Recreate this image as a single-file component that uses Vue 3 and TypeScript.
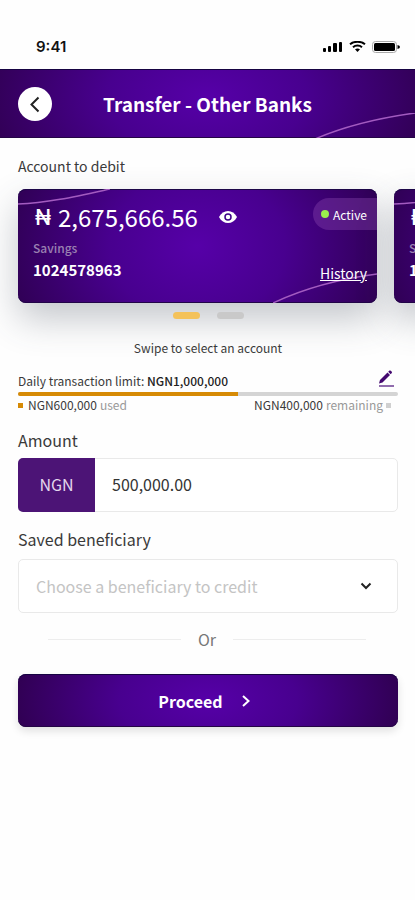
<script setup lang="ts">
import { ref } from 'vue'

interface Account {
  id: number
  balance: string
  kind: string
  number: string
}

const accounts: Account[] = [
  { id: 0, balance: '2,675,666.56', kind: 'Savings', number: '1024578963' },
  { id: 1, balance: '2,675,666.56', kind: 'Savings', number: '1024578963' },
]

const current = ref(0)
const hidden = ref(false)
const amount = ref('500,000.00')
const beneficiary = ref('')
const usedShare = 58
</script>

<template>
  <div class="page">
    <div class="status">
      <span class="clock">9:41</span>
      <div class="signals">
        <svg width="20" height="11" viewBox="0 0 20 11" aria-hidden="true">
          <rect x="0" y="7" width="3" height="4" rx="1" />
          <rect x="5" y="5" width="3" height="6" rx="1" />
          <rect x="10" y="2" width="4" height="9" rx="1" />
          <rect x="16" y="1" width="3" height="10" rx="1" />
        </svg>
        <svg width="17" height="11" viewBox="0 0 17 11" aria-hidden="true">
          <path d="M1 3.2C5 0 12 0 16 3.2" fill="none" stroke="#000" stroke-width="2" />
          <path d="M4 6.2C6.5 4 10.5 4 13 6.2" fill="none" stroke="#000" stroke-width="2" />
          <path d="M6 8.2Q8.500 6.600 11 8.200L8.500 11Z" />
        </svg>
        <svg width="28" height="12" viewBox="0 0 28 12" aria-hidden="true">
          <rect x="0.500" y="0.500" width="24" height="11" rx="3" fill="none" stroke="#aaa" />
          <rect x="2" y="2" width="21" height="8" rx="1.500" />
          <path d="M25.500 4Q28 4.500 28 6T25.500 8Z" />
        </svg>
      </div>
    </div>

    <header class="top">
      <svg class="top-arc" width="100" height="25" viewBox="0 0 100 25" aria-hidden="true">
        <path d="M0 26C30 13 64 5 100 0" />
      </svg>
      <button class="back" type="button" aria-label="Back">
        <svg width="34" height="34" viewBox="0 0 34 34" aria-hidden="true">
          <path d="M20.500 10.500L13.500 17.500L20.500 24.500" />
        </svg>
      </button>
      <h1>Transfer - Other Banks</h1>
    </header>

    <main class="content">
      <h2 class="debit-title">Account to debit</h2>

      <div class="track" :style="{ transform: `translateX(${current * -100}%)` }">
        <article v-for="account in accounts" :key="account.id" class="card">
          <svg class="arc-start" width="92" height="16" viewBox="0 0 92 16" aria-hidden="true">
            <path d="M0 15C30 14 60 7 92 0" />
          </svg>
          <svg class="arc-end" width="104" height="30" viewBox="0 0 104 30" aria-hidden="true">
            <path d="M0 30C32 15 66 6 104 1" />
          </svg>
          <div class="balance">
            <span class="naira">₦</span>
            <span class="sum">{{ hidden ? '••••••••' : account.balance }}</span>
            <button class="eye" type="button" aria-label="Toggle balance" @click="hidden = !hidden">
              <svg width="18" height="12" viewBox="0 0 18 12" aria-hidden="true">
                <path d="M0 6C4 -2 14 -2 18 6C14 14 4 14 0 6Z" fill="#fff" />
                <circle cx="9" cy="6" r="3" fill="none" stroke="#3c0088" stroke-width="1.500" />
              </svg>
            </button>
          </div>
          <span class="badge"><i class="live"></i>Active</span>
          <span class="kind">{{ account.kind }}</span>
          <span class="number">{{ account.number }}</span>
          <a class="history" href="#history">History</a>
        </article>
      </div>

      <div class="dots">
        <button
          v-for="account in accounts"
          :key="account.id"
          class="dot"
          :class="{ active: current === account.id }"
          type="button"
          :aria-label="`Account ${account.id + 1}`"
          @click="current = account.id"
        ></button>
      </div>
      <p class="hint">Swipe to select an account</p>

      <section class="limit">
        <div class="limit-head">
          <p>Daily transaction limit: <strong>NGN1,000,000</strong></p>
          <button class="edit" type="button" aria-label="Edit limit">
            <svg width="16" height="18" viewBox="0 0 16 18" aria-hidden="true">
              <path d="M1 13.500L2 10L9.500 2.500L12 5L4.500 12.500Z" fill="#43086f" />
              <path d="M10.200 1.800L11.500 0.600Q12.200 0.200 12.800 0.800L13.800 1.800Q14.200 2.400 13.800 3L12.600 4.300Z" fill="#43086f" />
              <path d="M1 16H16" stroke="#6b3b92" stroke-width="1.500" />
            </svg>
          </button>
        </div>
        <div class="meter" role="progressbar" aria-label="Daily limit used" :aria-valuenow="usedShare">
          <div class="meter-fill" :style="{ width: `${usedShare}%` }"></div>
        </div>
        <div class="limit-foot">
          <p><i class="mark used"></i>NGN600,000 <span>used</span></p>
          <p class="left">NGN400,000 <span>remaining</span><i class="mark rest"></i></p>
        </div>
      </section>

      <form class="form" @submit.prevent>
        <label class="label" for="amount">Amount</label>
        <div class="amount">
          <span class="currency">NGN</span>
          <input id="amount" v-model="amount" type="text" inputmode="decimal" />
        </div>

        <label class="label" for="beneficiary">Saved beneficiary</label>
        <div class="picker">
          <select id="beneficiary" v-model="beneficiary">
            <option value="">Choose a beneficiary to credit</option>
          </select>
          <svg width="12" height="8" viewBox="0 0 12 8" aria-hidden="true">
            <path d="M1.500 1.500L6 6L10.500 1.500" />
          </svg>
        </div>

        <div class="or"><span>Or</span></div>

        <button class="proceed" type="submit">
          Proceed
          <svg width="8" height="12" viewBox="0 0 8 12" aria-hidden="true">
            <path d="M1 1L6.500 6L1 11" />
          </svg>
        </button>
      </form>
    </main>
  </div>
</template>

<style>
body {
  margin: 0;
  background: #fefefe;
}
</style>

<style scoped>
* {
  box-sizing: border-box;
}

.page {
  min-height: 100vh;
  overflow: hidden;
  background: #fefefe;
  color: #3a3a3a;
  font-family: "Noto Sans CJK SC", "Noto Sans", sans-serif;
  font-size: 12px;
}

h1,
h2,
p {
  margin: 0;
  font-weight: 400;
}

button {
  padding: 0;
  border: 0;
  background: none;
  font-family: inherit;
  cursor: pointer;
}

svg {
  display: block;
}

.status {
  display: flex;
  align-items: center;
  justify-content: space-between;
  height: 69px;
  padding: 24px 15px 0 36px;
}

.clock {
  color: #111;
  font-family: Inter, sans-serif;
  font-size: 15px;
  font-weight: 600;
}

.signals {
  display: flex;
  align-items: center;
  gap: 6px;
}

.top {
  position: relative;
  display: flex;
  align-items: center;
  height: 69px;
  padding: 0 18px;
  background: radial-gradient(ellipse 60% 210% at 50% 40%, #5600a8 0%, #48008f 40%, #2c0048 100%);
  box-shadow: inset 0 1px #160342, inset 0 -1px #240545;
}

.top-arc,
.arc-start,
.arc-end {
  position: absolute;
  fill: none;
  stroke: #a35bc0;
  stroke-width: 1.5;
}

.top-arc {
  right: 0;
  bottom: 0;
}

.back {
  width: 34px;
  height: 34px;
  border-radius: 50%;
  background: #fff;
}

.back path {
  fill: none;
  stroke: #222;
  stroke-width: 2;
}

.top h1 {
  flex: 1;
  padding-right: 34px;
  color: #fff;
  font-size: 19px;
  font-weight: 700;
  line-height: 28px;
  text-align: center;
}

.content {
  padding: 18px 17px 0 18px;
}

.debit-title {
  font-size: 14px;
  line-height: 20px;
}

.track {
  display: flex;
  gap: 17px;
  margin: 13px 21px 0 0;
  transition: transform 0.25s;
}

.card {
  position: relative;
  display: flex;
  flex: 0 0 100%;
  flex-direction: column;
  align-items: flex-start;
  height: 114px;
  padding: 12px 10px 0 15px;
  border-radius: 8px;
  background: radial-gradient(ellipse 58% 150% at 50% 50%, #5600a8 0%, #48008f 42%, #2c004c 100%);
  box-shadow: inset 0 1px #1c0648, inset 0 -1px #210447, 0 16px 36px rgba(60, 70, 85, 0.3);
  color: #fff;
}

.arc-start {
  top: 0;
  left: 0;
}

.arc-end {
  right: 0;
  bottom: 0;
}

.balance {
  display: flex;
  align-items: center;
  height: 32px;
  padding-left: 2px;
}

.naira {
  width: 23px;
  font-family: Inter, "Noto Sans", sans-serif;
  font-size: 21px;
  font-weight: 500;
}

.sum {
  font-size: 24px;
  line-height: 32px;
}

.eye {
  margin-left: 21px;
}

.badge {
  position: absolute;
  top: 9px;
  right: 0;
  display: flex;
  align-items: center;
  gap: 4px;
  height: 32px;
  padding: 0 10px 0 8px;
  border-radius: 16px 0 0 16px;
  background: rgba(145, 75, 180, 0.36);
  font-size: 12px;
}

.live {
  width: 8px;
  height: 8px;
  border-radius: 50%;
  background: #9af04c;
}

.kind {
  margin-top: 5px;
  color: #9a80b1;
  font-size: 12px;
  font-weight: 500;
  line-height: 20px;
}

.number {
  font-size: 15px;
  font-weight: 700;
  line-height: 24px;
}

.history {
  position: absolute;
  right: 10px;
  bottom: 19px;
  color: #fff;
  font-size: 14px;
  line-height: 22px;
}

.dots {
  display: flex;
  justify-content: center;
  gap: 17px;
  margin-top: 9px;
}

.dot {
  position: relative;
  width: 27px;
  height: 7px;
  border-radius: 4px;
  background: #c9c9c9;
}

.dot.active {
  background: #f4c25a;
}

.hint {
  position: relative;
  margin-top: 20px;
  font-size: 12px;
  line-height: 18px;
  text-align: center;
}

.limit {
  margin-top: 12px;
}

.limit-head {
  display: flex;
  align-items: flex-end;
  justify-content: space-between;
  height: 22px;
  padding-right: 4px;
}

.limit-head p {
  line-height: 20px;
}

.edit {
  padding-bottom: 3px;
}

strong {
  color: #222;
  font-weight: 500;
}

.meter {
  height: 4px;
  margin-top: 1px;
  border-radius: 2px;
  background: #d4d4d4;
}

.meter-fill {
  height: 4px;
  border-radius: 2px 0 0 2px;
  background: #d68a05;
}

.limit-foot {
  display: flex;
  justify-content: space-between;
  padding-right: 7px;
  line-height: 18px;
}

.limit-foot p {
  display: flex;
  align-items: center;
  gap: 3px;
}

.limit-foot span {
  color: #999;
}

.mark {
  width: 5px;
  height: 5px;
}

.used {
  margin-right: 2px;
  background: #d68a05;
}

.rest {
  background: #d0d0d0;
}

.form {
  display: flex;
  flex-direction: column;
  padding-top: 14px;
}

.label {
  font-size: 16px;
  line-height: 24px;
}

.amount,
.picker {
  display: flex;
  height: 54px;
  border: 1px solid #e9e9e9;
  border-radius: 5px;
  background: #fff;
}

.amount {
  margin: 6px 0 15px;
}

.currency {
  display: flex;
  align-items: center;
  justify-content: center;
  width: 77px;
  margin: -1px 0 -1px -1px;
  padding-bottom: 2px;
  border-radius: 5px 0 0 5px;
  background: #4c1476;
  color: #e3d7ec;
  font-size: 16px;
}

input,
select {
  flex: 1;
  min-width: 0;
  border: 0;
  outline: 0;
  background: none;
  font-family: inherit;
  font-size: 16px;
}

input {
  padding: 0 17px 2px;
  color: #333;
}

.picker {
  align-items: center;
  margin-top: 8px;
  padding-right: 25px;
}

select {
  height: 52px;
  padding: 0 17px;
  appearance: none;
  color: #c4c4c4;
}

.picker path {
  fill: none;
  stroke: #222;
  stroke-width: 2;
}

.or {
  display: flex;
  align-items: center;
  gap: 17px;
  margin: 14px 32px 0 30px;
  color: #777;
  font-size: 16px;
  line-height: 24px;
}

.or::before,
.or::after {
  flex: 1;
  height: 1px;
  background: #ededed;
  content: "";
}

.proceed {
  display: flex;
  align-items: center;
  justify-content: center;
  gap: 19px;
  height: 53px;
  margin-top: 23px;
  padding-right: 8px;
  border-radius: 8px;
  background: radial-gradient(ellipse 56% 220% at 50% 50%, #5600a8 0%, #48008f 42%, #2c0048 100%);
  box-shadow: inset 0 1px #160342, inset 0 -1px #240545, 0 4px 8px rgba(0, 0, 0, 0.12);
  color: #fff;
  font-size: 16px;
  font-weight: 700;
}

.proceed path {
  fill: none;
  stroke: #fff;
  stroke-width: 2;
}
</style>
